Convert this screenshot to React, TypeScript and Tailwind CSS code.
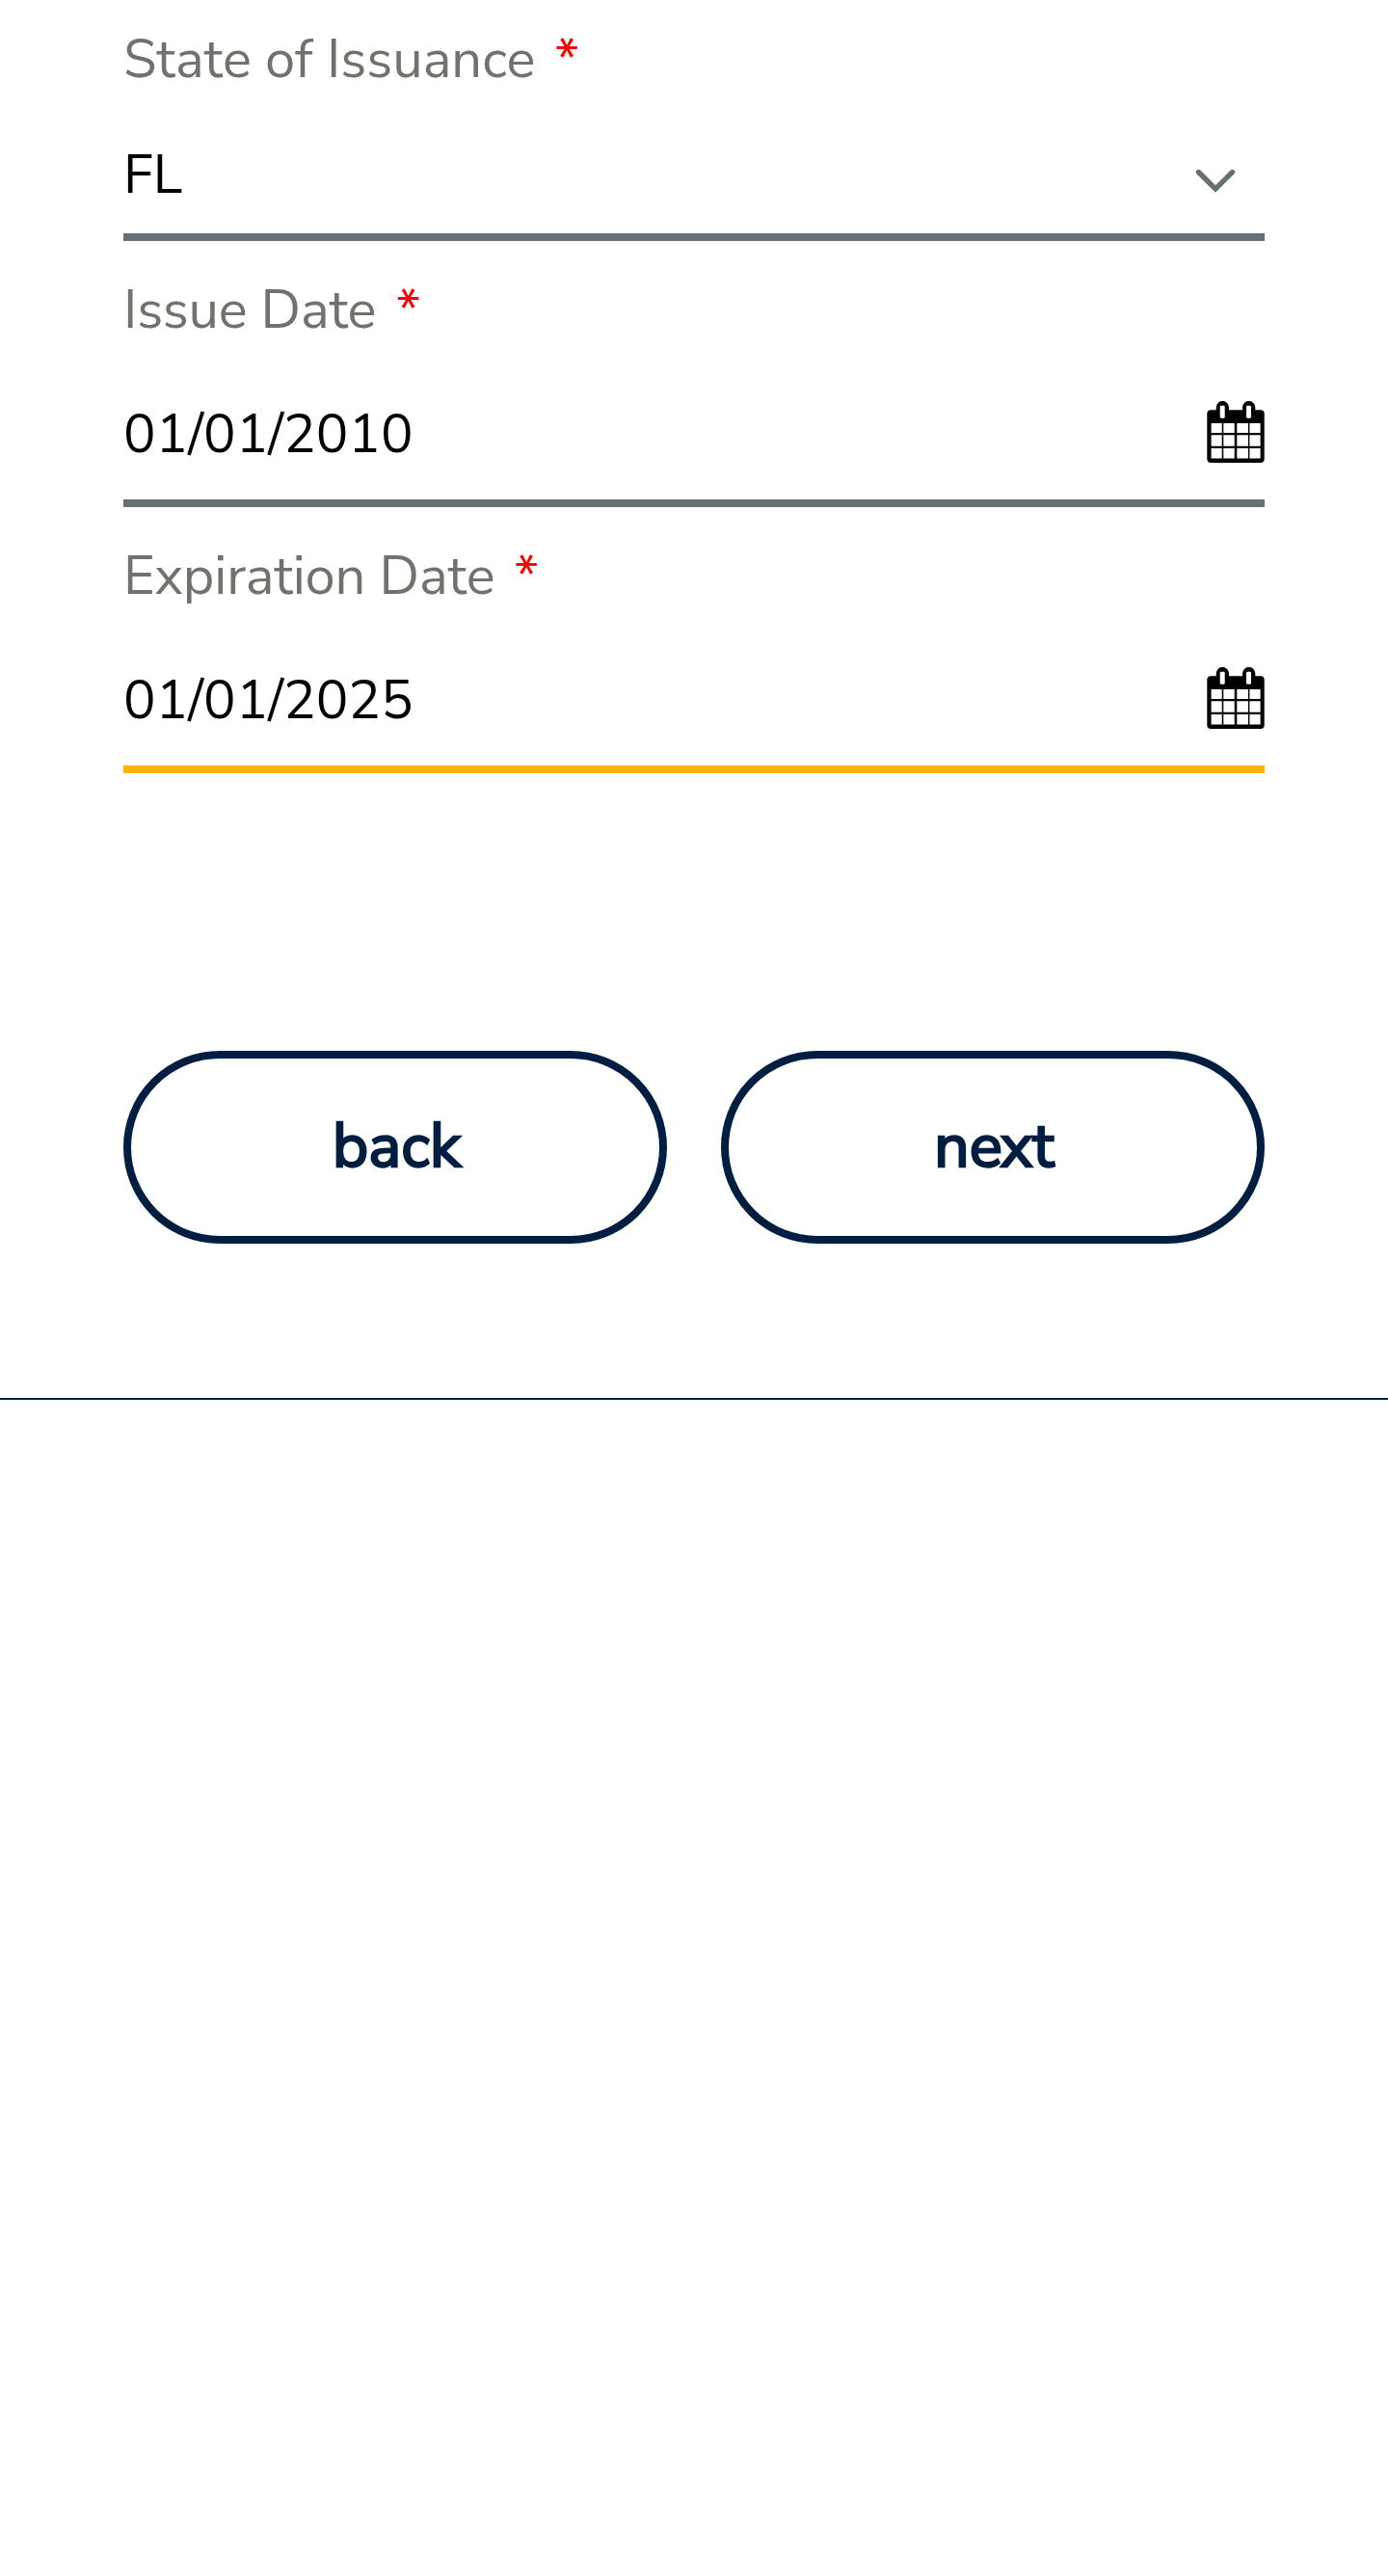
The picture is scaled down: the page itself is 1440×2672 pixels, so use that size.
import type { ReactNode } from "react";

function CalendarIcon() {
  return (
    <svg width="60" height="64" viewBox="0 0 60 64" className="mt-0.5 block shrink-0">
      <rect x="0.3" y="9.3" width="59.4" height="54.7" rx="4" fill="#000" />
      <path d="M9.700 16V6.600a6.650 6.650 0 0 1 13.300 0V16zM37 16V6.600a6.650 6.650 0 0 1 13.300 0V16z" fill="#000" />
      <path
        d="M13.700 6q0-1.300 1.300-1.300h2.400q1.300 0 1.300 1.300v10.400q0 1.300-1.300 1.300H15q-1.300 0-1.300-1.300zM41 6q0-1.300 1.300-1.300h2.400q1.300 0 1.300 1.300v10.400q0 1.300-1.300 1.300h-2.400q-1.300 0-1.300-1.300z"
        fill="#fff"
      />
      <path
        d="M4.600 23h11.100v10H4.600zM17.300 23h11.400v10H17.300zM31.300 23h11.700v10H31.300zM44.400 23h11.200v10H44.400zM4.600 35.200h11.100v11.600H4.600zM17.300 35.200h11.400v11.600H17.300zM31.300 35.200h11.700v11.600H31.300zM44.400 35.200h11.200v11.600H44.400zM4.600 49h11.100v10.600H4.600zM17.300 49h11.400v10.600H17.300zM31.300 49h11.700v10.600H31.300zM44.400 49h11.200v10.600H44.400z"
        fill="#fff"
      />
    </svg>
  );
}

function ChevronIcon() {
  return (
    <svg width="42" height="26" viewBox="0 0 42 26" className="mt-[19px] mr-[30px] block shrink-0">
      <path d="M3.500 3.500 21 21 38.500 3.500" fill="none" stroke="#647071" strokeWidth="5.4" strokeLinecap="round" />
    </svg>
  );
}

function Label({ text, className }: { text: string; className: string }) {
  return (
    <label className="flex h-[76px] items-start leading-[84px] whitespace-pre text-[#70726b]">
      <span className={className}>{text}</span>
      <span className="text-[#ff0000]">*</span>
    </label>
  );
}

function Control({ value, className, children }: { value: string; className: string; children: ReactNode }) {
  return (
    <div className={`flex items-start justify-between border-b-8 text-black ${className}`}>
      <span className="leading-[104px]">{value}</span>
      <div className="flex h-24 items-center">{children}</div>
    </div>
  );
}

function PillButton({ children }: { children: ReactNode }) {
  return (
    <button
      type="button"
      className="h-[200px] rounded-full border-8 border-[#001e41] pb-0.5 pl-[3px] [-webkit-text-stroke:2.4px_#001e41]"
    >
      {children}
    </button>
  );
}

export default function App() {
  return (
    <main className="h-[2672px] w-full overflow-hidden bg-white pt-5 font-['Nunito_Sans','Nunito','Lato',sans-serif] text-[56px]">
      <form className="px-32">
        <Label text="State of Issuance" className="w-[447.5px]" />
        <Control value="FL" className="h-[154px] border-[#647071] pt-[34px]">
          <ChevronIcon />
        </Control>
        <div className="mt-[30px]">
          <Label text="Issue Date" className="w-[283px] tracking-[-0.2px]" />
          <Control value="01/01/2010" className="h-[170px] border-[#647071] pt-[43px]">
            <CalendarIcon />
          </Control>
        </div>
        <div className="mt-[30px]">
          <Label text="Expiration Date" className="w-[405.5px] tracking-[-0.14px]" />
          <Control value="01/01/2025" className="h-[170px] border-[#ffb500] pt-[43px]">
            <CalendarIcon />
          </Control>
        </div>
        <div className="mt-72 grid grid-cols-2 gap-14 text-[64px] text-[#001e41]">
          <PillButton>back</PillButton>
          <PillButton>
            ne<span className="-ml-0.5">xt</span>
          </PillButton>
        </div>
      </form>
      <div className="mt-40 h-0.5 bg-[#001e41]" />
    </main>
  );
}
